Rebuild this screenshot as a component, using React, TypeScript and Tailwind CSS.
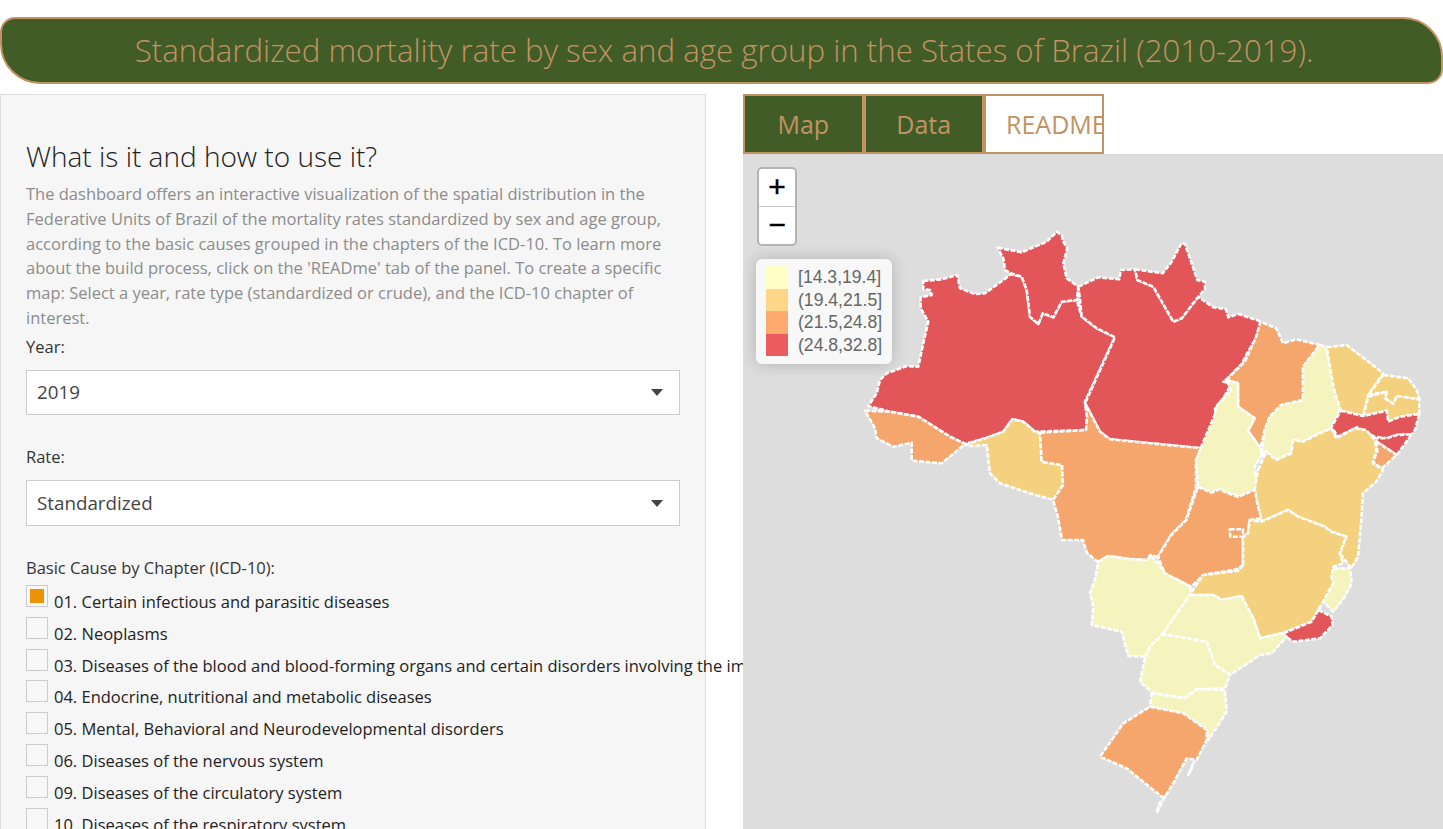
import React from "react";

const C = { red: "#e2565a", org: "#f5a66c", yel: "#f4d17f", pale: "#f5f4be" };
const Z = (ox: number, oy: number, s: string) =>
  s.trim().split(/\s+/).map((p) => {
    const [x, y] = p.split(",").map(Number);
    return `${(ox + x / 3).toFixed(1)},${(oy + y / 3).toFixed(1)}`;
  }).join(" ");
const z3 = (s: string) => Z(850, 220, s);
const z4 = (s: string) => Z(1143, 300, s);
const z5 = (s: string) => Z(1050, 530, s);
const z7 = (s: string) => Z(1060, 230, s);
const z8 = (s: string) => Z(1300, 340, s);

const states: [string, string][] = [
  [C.red, z3("220,183 275,178 322,165 330,205 375,222 405,220 460,180 482,163 515,170 530,210 540,290 565,312 578,280 610,292 635,245 680,240 695,290 740,325 795,350 705,545 712,590 708,630 555,635 520,605 487,598 460,635 405,655 345,672 300,650 205,590 120,575 55,558 80,520 90,480 110,460 170,438 205,440 220,370 235,305 212,265 212,232 245,225 240,210 220,208")],
  [C.red, z3("443,83 515,97 590,65 620,35 635,45 640,65 652,85 640,130 650,175 685,200 680,240 635,245 610,292 578,280 565,312 540,290 530,210 515,170 482,160 465,150 460,115")],
  [C.red, z7("55,170 115,142 178,148 182,120 225,118 232,150 280,170 340,275 365,265 415,200 425,208 460,232 498,238 505,262 535,252 605,275 585,330 560,372 545,402 500,448 490,455 515,460 490,505 465,535 468,570 425,655 150,628 120,605 75,520 165,322 110,295 65,260 60,210")],
  [C.red, z7("225,118 308,130 335,95 365,38 375,42 395,100 412,150 435,155 435,178 415,200 365,265 340,275 280,170 232,150")],
  [C.org, z3("45,572 120,575 205,590 300,650 345,672 275,730 185,722 185,668 130,680 80,655 75,625")],
  [C.yel, z3("345,675 405,655 460,635 487,598 520,605 555,635 570,640 575,725 635,735 640,795 610,840 540,820 450,790 420,760 410,675 360,678")],
  [C.org, "1040,432.7 1086,430 1087,417 1085,403 1100,431.7 1110,439.3 1201.7,448.3 1196,460 1196,487 1186,520 1171,535 1158,557 1150,555 1148,560 1130,559 1108,556 1098,562 1087,553 1083,540 1062,540 1058,517 1053,500 1063,485 1062,465 1041.7,461.7"],
  [C.org, z4("250,240 305,185 340,110 352,65 400,85 420,130 460,118 530,135 480,200 480,300 415,315 380,350 365,390 352,445 315,392 335,355 285,320 285,250")],
  [C.pale, z4("250,240 285,250 285,320 335,355 315,392 352,445 360,460 335,500 345,570 285,590 250,578 230,568 205,578 165,560 160,480 175,440 215,345 220,320 245,290 265,270")],
  [C.pale, z4("530,135 550,140 565,210 595,320 585,345 565,385 520,405 480,425 450,420 445,460 400,480 370,455 355,460 365,390 380,350 415,315 480,300 480,200")],
  [C.yel, z8("80,22 140,15 250,100 205,165 190,228 122,212 100,140")],
  [C.yel, z8("250,105 325,115 350,150 358,178 290,170 280,192 255,175 260,155 205,165")],
  [C.yel, z8("190,228 205,170 260,155 255,175 280,192 290,168 358,178 358,222 300,230 265,245 260,212")],
  [C.red, z8("122,212 190,228 260,212 265,245 300,230 358,222 345,270 335,283 290,285 260,295 222,290 200,275 170,262 115,290 100,270 92,265")],
  [C.red, z8("222,295 260,295 290,285 335,283 290,345 230,305")],
  [C.org, z8("230,305 290,345 245,385 218,365 232,335")],
  [C.yel, z4("345,510 370,455 400,480 445,460 450,420 480,425 520,405 565,385 580,415 635,385 670,390 695,420 700,450 690,490 720,510 700,545 660,580 655,660 645,770 625,805 590,760 610,710 565,695 545,680 465,650 435,630 355,665 345,620 335,570")],
  [C.org, z4("165,560 205,578 230,568 250,578 285,590 335,570 345,620 355,655 320,660 315,700 300,710 300,795 280,808 180,825 145,860 65,820 45,770 85,705 130,660")],
  [C.org, z4("260,688 300,688 300,710 262,710")],
  [C.pale, z5("145,95 175,78 240,88 295,90 300,75 325,100 345,130 420,170 422,195 340,310 290,380 235,378 215,305 125,285 130,230 120,190 135,150")],
  [C.yel, "1243,565 1243,536.7 1248,533.3 1249.7,520 1261.3,521.7 1288,510 1298,516.7 1324.7,526.7 1331.3,531.7 1346.3,536.7 1339.7,553.3 1343.3,563.3 1333.3,566.7 1331.7,576.7 1333.3,583.3 1323.3,601.7 1318.3,610 1311.7,621.7 1281.7,633.3 1260,638.3 1253.3,618.3 1245,606.7 1241.7,596 1221.7,600 1213.3,595 1191.7,595 1190.7,593.3 1203.3,575 1238.3,570.7"],
  [C.pale, z5("850,115 900,115 905,160 885,200 850,245 820,215 850,160 845,140")],
  [C.red, z5("805,240 845,260 848,285 810,325 730,335 695,312 785,275")],
  [C.pale, z5("425,195 490,195 515,210 575,198 610,265 630,325 695,310 710,320 665,370 630,375 540,435 495,405 470,335 350,315 335,315 420,195")],
  [C.pale, z5("335,315 350,315 470,335 495,405 540,435 525,475 440,478 405,505 310,490 270,455 285,385 300,350")],
  [C.pale, z5("305,490 405,505 440,478 525,480 530,545 475,630 470,600 400,550 300,530")],
  [C.org, z5("300,530 400,550 470,600 470,630 440,690 410,685 370,760 345,800 335,800 230,715 150,680 220,580")],
  [C.org, z5("345,800 320,848 328,820")],
  [C.org, z5("432,695 415,735 425,715")],
];

const Select = ({ value }: { value: string }) => (
  <div className="flex h-full w-[654px] items-center justify-between border border-[#ccc] bg-white pl-[10px] pr-[15px] text-[18.8px] text-[#444]">
    <span>{value}</span>
    <svg width="14" height="7" viewBox="0 0 14 7" className="block"><path d="M1 0h12L7 7z" fill="#444" /></svg>
  </div>
);

const causes = [
  "01. Certain infectious and parasitic diseases",
  "02. Neoplasms",
  "03. Diseases of the blood and blood-forming organs and certain disorders involving the immune mechanism",
  "04. Endocrine, nutritional and metabolic diseases",
  "05. Mental, Behavioral and Neurodevelopmental disorders",
  "06. Diseases of the nervous system",
  "09. Diseases of the circulatory system",
  "10. Diseases of the respiratory system",
];

const legend: [string, string][] = [
  ["#ffffc8", "[14.3,19.4]"],
  ["#fed687", "(19.4,21.5]"],
  ["#fea96e", "(21.5,24.8]"],
  ["#eb5c60", "(24.8,32.8]"],
];

export default function App() {
  return (
    <div className="h-[829px] w-full overflow-hidden bg-white pt-[17px] font-['Open_Sans',sans-serif]">
      <div className="flex h-[67px] items-center justify-center rounded-[15px_40px_15px_40px] border-2 border-[#c19363] bg-[#425c27] pl-[5px] text-[31.25px] font-light text-[#c19363]">
        Standardized mortality rate by sex and age group in the States of Brazil (2010-2019).
      </div>
      <div className="mt-[10px] flex gap-[37px]">
        <div className="h-[760px] w-[706px] shrink-0 border border-[#ddd] bg-[#f6f6f6] pl-[25px] pt-[43px]">
          <h3 className="text-[28px] font-light leading-[36px] text-[#222]">What is it and how to use it?</h3>
          <p className="mt-[8px] w-[640px] text-[16.5px] leading-[24.75px] text-[#8c8c8c]">
            The dashboard offers an interactive visualization of the spatial distribution in the Federative Units of Brazil of the mortality rates standardized by sex and age group, according to the basic causes grouped in the chapters of the ICD-10. To learn more about the build process, click on the 'READme' tab of the panel. To create a specific map: Select a year, rate type (standardized or crude), and the ICD-10 chapter of interest.
          </p>
          <div className="mt-[3.5px] text-[16.5px] leading-[25px] text-[#333]">Year:</div>
          <div className="mt-[11px] h-[45px]"><Select value="2019" /></div>
          <div className="mt-[29px] text-[16.5px] leading-[25px] text-[#333]">Rate:</div>
          <div className="mt-[11px] h-[46px]"><Select value="Standardized" /></div>
          <div className="mt-[29px] text-[16.5px] leading-[25px] text-[#333]">Basic Cause by Chapter (ICD-10):</div>
          <div className="mt-[5px] flex flex-col gap-[9.8px]">
            {causes.map((c, i) => (
              <div key={c} className="flex h-[22px] items-start gap-[6px] whitespace-nowrap text-[16.5px] leading-[22px] text-[#222]">
                <span className="flex h-[22px] w-[22px] shrink-0 items-center justify-center border border-[#ccc] bg-[#f8f8f8]">
                  {i === 0 && <span className="h-[14px] w-[14px] bg-[#ec9100]" />}
                </span>
                <span className="mt-[6px]">{c}</span>
              </div>
            ))}
          </div>
        </div>
        <div className="relative z-10 flex-1 bg-white">
          <div className="flex h-[60px] text-[25px] leading-[56px] text-[#c19363]">
            <div className="h-[60px] w-[120.5px] border-2 border-[#c19363] bg-[#425c27] text-center">Map</div>
            <div className="h-[60px] w-[120.5px] border-2 border-[#c19363] bg-[#425c27] text-center">Data</div>
            <div className="h-[60px] w-[120px] overflow-hidden whitespace-nowrap border-2 border-[#c19363] bg-white pl-[20px]">README</div>
          </div>
          <div className="relative h-[700px] overflow-hidden bg-[#ddd]">
            <svg className="block" width="700" height="700" viewBox="743 154 700 700">
              {states.map(([fill, pts], i) => (
                <polygon key={i} points={pts} fill={fill} stroke="#fff" strokeWidth="2.6" strokeDasharray="5 1.5" strokeLinejoin="round" />
              ))}
            </svg>
            <div className="absolute left-[14px] top-[13px] w-[40px] rounded-[5px] border-2 border-[#b4b4b4] bg-white font-['Liberation_Mono',monospace] text-black [-webkit-text-stroke:0.4px_black]">
              <div className="flex h-[38px] items-center justify-center rounded-t-[3px] border-b border-[#ccc] pt-[3px] text-[30px] leading-none">+</div>
              <div className="flex h-[37px] items-center justify-center pt-[3px] text-[30px] leading-none">−</div>
            </div>
            <div className="absolute left-[13px] top-[105px] flex h-[105px] w-[136px] flex-col rounded-[6px] bg-[#f8f8f8] pl-[10px] pt-[7px] font-['Liberation_Sans',sans-serif] text-[17.6px] leading-[22.5px] text-[#666] shadow-[0_0_15px_rgba(0,0,0,0.2)]">
              {legend.map(([color, text]) => (
                <div key={text} className="flex h-[22.5px] items-center gap-[10px]">
                  <span className="h-[22.5px] w-[22px]" style={{ backgroundColor: color }} />
                  <span>{text}</span>
                </div>
              ))}
            </div>
          </div>
        </div>
      </div>
    </div>
  );
}
